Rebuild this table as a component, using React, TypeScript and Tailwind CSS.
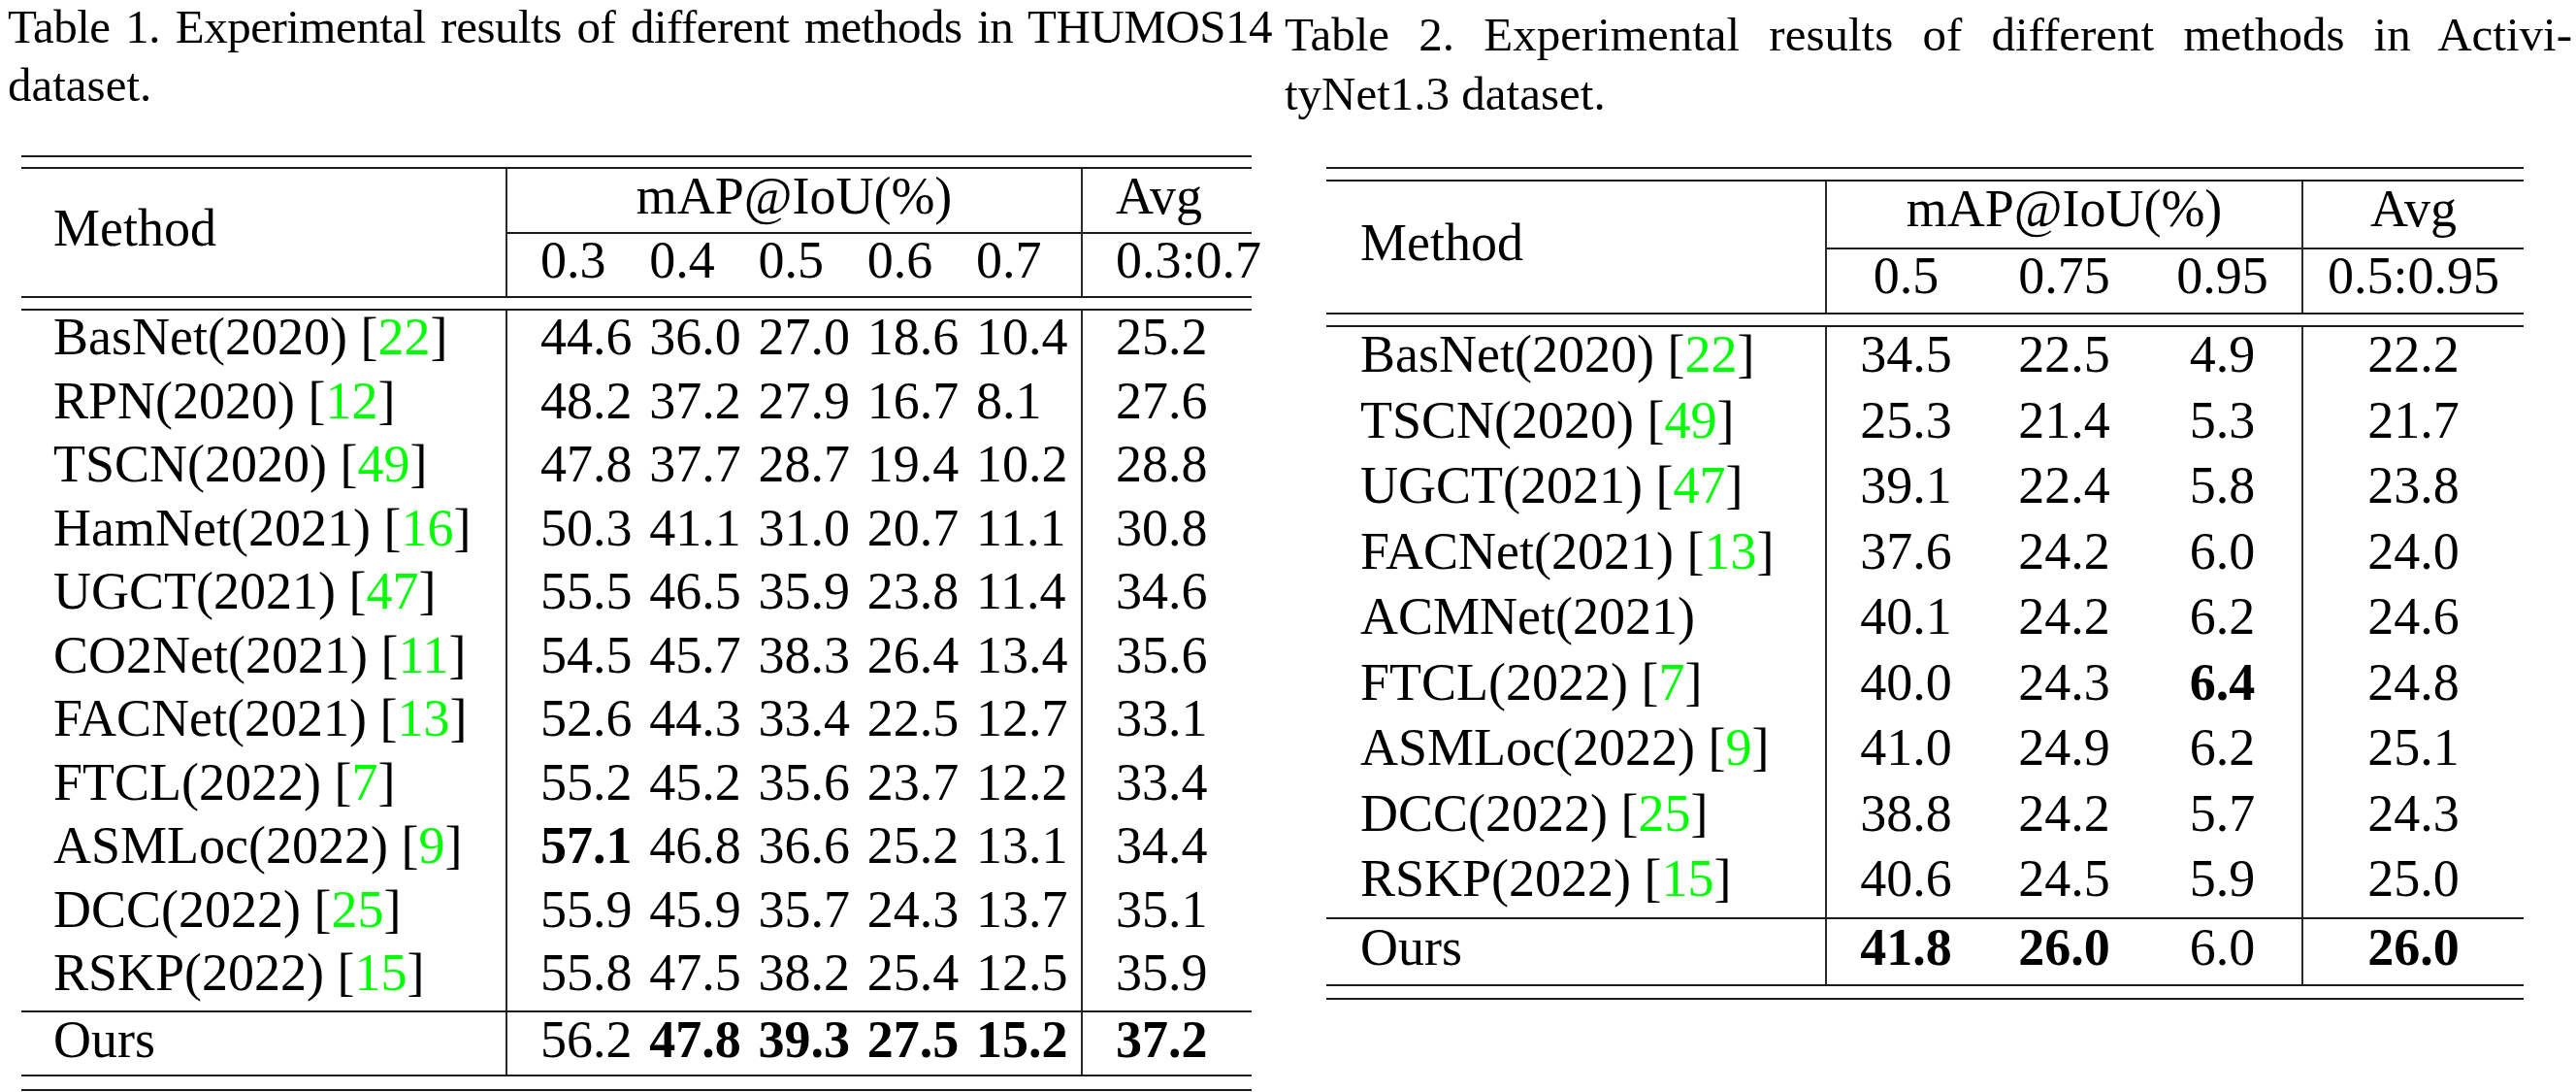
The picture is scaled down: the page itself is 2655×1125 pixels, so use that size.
import React from 'react';

type Row = { name: string; cite?: string; vals: string[]; avg: string };

// a leading '*' marks a bold value
const thumos: Row[] = [
  { name: 'BasNet(2020)', cite: '22', vals: ['44.6', '36.0', '27.0', '18.6', '10.4'], avg: '25.2' },
  { name: 'RPN(2020)', cite: '12', vals: ['48.2', '37.2', '27.9', '16.7', '8.1'], avg: '27.6' },
  { name: 'TSCN(2020)', cite: '49', vals: ['47.8', '37.7', '28.7', '19.4', '10.2'], avg: '28.8' },
  { name: 'HamNet(2021)', cite: '16', vals: ['50.3', '41.1', '31.0', '20.7', '11.1'], avg: '30.8' },
  { name: 'UGCT(2021)', cite: '47', vals: ['55.5', '46.5', '35.9', '23.8', '11.4'], avg: '34.6' },
  { name: 'CO2Net(2021)', cite: '11', vals: ['54.5', '45.7', '38.3', '26.4', '13.4'], avg: '35.6' },
  { name: 'FACNet(2021)', cite: '13', vals: ['52.6', '44.3', '33.4', '22.5', '12.7'], avg: '33.1' },
  { name: 'FTCL(2022)', cite: '7', vals: ['55.2', '45.2', '35.6', '23.7', '12.2'], avg: '33.4' },
  { name: 'ASMLoc(2022)', cite: '9', vals: ['*57.1', '46.8', '36.6', '25.2', '13.1'], avg: '34.4' },
  { name: 'DCC(2022)', cite: '25', vals: ['55.9', '45.9', '35.7', '24.3', '13.7'], avg: '35.1' },
  { name: 'RSKP(2022)', cite: '15', vals: ['55.8', '47.5', '38.2', '25.4', '12.5'], avg: '35.9' },
];
const thumosOurs: Row = { name: 'Ours', vals: ['56.2', '*47.8', '*39.3', '*27.5', '*15.2'], avg: '*37.2' };

const anet: Row[] = [
  { name: 'BasNet(2020)', cite: '22', vals: ['34.5', '22.5', '4.9'], avg: '22.2' },
  { name: 'TSCN(2020)', cite: '49', vals: ['25.3', '21.4', '5.3'], avg: '21.7' },
  { name: 'UGCT(2021)', cite: '47', vals: ['39.1', '22.4', '5.8'], avg: '23.8' },
  { name: 'FACNet(2021)', cite: '13', vals: ['37.6', '24.2', '6.0'], avg: '24.0' },
  { name: 'ACMNet(2021)', vals: ['40.1', '24.2', '6.2'], avg: '24.6' },
  { name: 'FTCL(2022)', cite: '7', vals: ['40.0', '24.3', '*6.4'], avg: '24.8' },
  { name: 'ASMLoc(2022)', cite: '9', vals: ['41.0', '24.9', '6.2'], avg: '25.1' },
  { name: 'DCC(2022)', cite: '25', vals: ['38.8', '24.2', '5.7'], avg: '24.3' },
  { name: 'RSKP(2022)', cite: '15', vals: ['40.6', '24.5', '5.9'], avg: '25.0' },
];
const anetOurs: Row = { name: 'Ours', vals: ['*41.8', '*26.0', '6.0'], avg: '*26.0' };

const Num = ({ v }: { v: string }) =>
  v.startsWith('*') ? <span className="font-bold">{v.slice(1)}</span> : <span>{v}</span>;

const MethodName = ({ row }: { row: Row }) => (
  <span className="whitespace-nowrap">
    {row.name}
    {row.cite && (
      <>
        {' '}[<span className="text-[#00ff00]">{row.cite}</span>]
      </>
    )}
  </span>
);

const Rule = ({ className = '' }: { className?: string }) => (
  <div className={`h-[2px] bg-[#1c1c1c] ${className}`} />
);

const Thumos = () => (
  <div className="ml-[22px] mt-[40px] w-[1268px] text-[54px]">
    <Rule />
    <Rule className="mt-[10px]" />
    <div className="grid h-[131px] grid-cols-[499px_593px_176px]">
      <div className="flex items-center pb-[9px] pl-[33px] leading-[54px]">Method</div>
      <div className="flex flex-col border-l-2 border-[#2a2a2a]">
        <div className="h-[67px] border-b-2 border-[#1c1c1c] text-center leading-[56px]">mAP@IoU(%)</div>
        <div className="grid grid-cols-[repeat(5,112.25px)] pl-[34px] leading-[54px]">
          {['0.3', '0.4', '0.5', '0.6', '0.7'].map((h) => (
            <span key={h}>{h}</span>
          ))}
        </div>
      </div>
      <div className="flex flex-col border-l-2 border-[#2a2a2a]">
        <div className="h-[67px] border-b-2 border-[#1c1c1c] pl-[34px] leading-[56px]">Avg</div>
        <div className="whitespace-nowrap pl-[34px] leading-[54px]">0.3:0.7</div>
      </div>
    </div>
    <Rule />
    <Rule className="mt-[11px]" />
    {thumos.map((r) => (
      <div key={r.name} className="grid h-[65.5px] grid-cols-[499px_593px_176px] leading-[54px]">
        <div className="pl-[33px]">
          <MethodName row={r} />
        </div>
        <div className="grid grid-cols-[repeat(5,112.25px)] border-l-2 border-[#2a2a2a] pl-[34px]">
          {r.vals.map((v, i) => (
            <Num key={i} v={v} />
          ))}
        </div>
        <div className="border-l-2 border-[#2a2a2a] pl-[34px]">
          <Num v={r.avg} />
        </div>
      </div>
    ))}
    <Rule />
    <div className="grid h-[64px] grid-cols-[499px_593px_176px] leading-[56px]">
      <div className="pl-[33px]">{thumosOurs.name}</div>
      <div className="grid grid-cols-[repeat(5,112.25px)] border-l-2 border-[#2a2a2a] pl-[34px]">
        {thumosOurs.vals.map((v, i) => (
          <Num key={i} v={v} />
        ))}
      </div>
      <div className="border-l-2 border-[#2a2a2a] pl-[34px]">
        <Num v={thumosOurs.avg} />
      </div>
    </div>
    <Rule />
    <Rule className="mt-[13px]" />
  </div>
);

const ActivityNet = () => (
  <div className="ml-[47px] mt-[45px] w-[1234px] text-[54px]">
    <Rule />
    <Rule className="mt-[11px]" />
    <div className="grid h-[135px] grid-cols-[514px_491px_229px]">
      <div className="flex items-center pb-[9px] pl-[35px] leading-[54px]">Method</div>
      <div className="flex flex-col border-l-2 border-[#2a2a2a]">
        <div className="h-[70px] border-b-2 border-[#1c1c1c] text-center leading-[56px]">mAP@IoU(%)</div>
        <div className="grid grid-cols-3 text-center leading-[54px]">
          {['0.5', '0.75', '0.95'].map((h) => (
            <span key={h}>{h}</span>
          ))}
        </div>
      </div>
      <div className="flex flex-col border-l-2 border-[#2a2a2a] text-center">
        <div className="h-[70px] border-b-2 border-[#1c1c1c] leading-[56px]">Avg</div>
        <div className="whitespace-nowrap leading-[54px]">0.5:0.95</div>
      </div>
    </div>
    <Rule />
    <Rule className="mt-[11px]" />
    {anet.map((r) => (
      <div key={r.name} className="grid h-[67.5px] grid-cols-[514px_491px_229px] leading-[56px]">
        <div className="pl-[35px]">
          <MethodName row={r} />
        </div>
        <div className="grid grid-cols-3 border-l-2 border-[#2a2a2a] text-center">
          {r.vals.map((v, i) => (
            <Num key={i} v={v} />
          ))}
        </div>
        <div className="border-l-2 border-[#2a2a2a] text-center">
          <Num v={r.avg} />
        </div>
      </div>
    ))}
    <Rule />
    <div className="grid h-[67px] grid-cols-[514px_491px_229px] leading-[58px]">
      <div className="pl-[35px]">{anetOurs.name}</div>
      <div className="grid grid-cols-3 border-l-2 border-[#2a2a2a] text-center">
        {anetOurs.vals.map((v, i) => (
          <Num key={i} v={v} />
        ))}
      </div>
      <div className="border-l-2 border-[#2a2a2a] text-center">
        <Num v={anetOurs.avg} />
      </div>
    </div>
    <Rule />
    <Rule className="mt-[12px]" />
  </div>
);

export default function App() {
  return (
    <div className="flex h-[1125px] w-[2655px] overflow-hidden bg-white font-['Liberation_Serif','Times_New_Roman',serif] text-black">
      {/* Left: Table 1 */}
      <section className="w-[1320px] shrink-0">
        <div className="w-[1311px] pl-[8px] text-[49px]">
          <div className="whitespace-nowrap text-justify leading-[56px] tracking-[-0.5px] [text-align-last:justify]">
            Table 1. Experimental results of different methods in THUMOS14
          </div>
          <div className="leading-[64px]">dataset.</div>
        </div>
        <Thumos />
      </section>

      {/* Right: Table 2 */}
      <section className="flex-1">
        <div className="w-[1331px] pl-[4px] pt-[5px] text-[49px] leading-[61px]">
          <div className="whitespace-nowrap text-justify [text-align-last:justify]">
            Table 2.  Experimental results of different methods in Activi-
          </div>
          <div>tyNet1.3 dataset.</div>
        </div>
        <ActivityNet />
      </section>
    </div>
  );
}
